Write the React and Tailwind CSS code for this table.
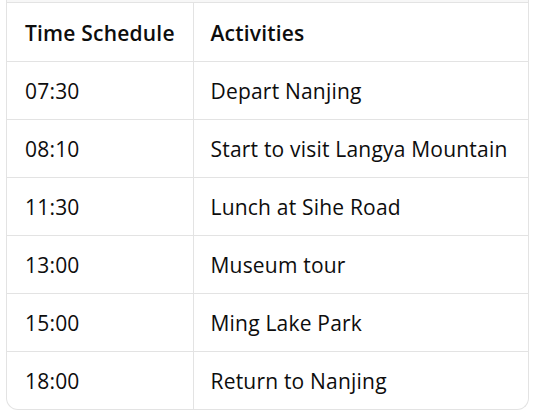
export default function App() {
  const rows = [
    ["07:30", "Depart Nanjing"],
    ["08:10", "Start to visit Langya Mountain"],
    ["11:30", "Lunch at Sihe Road"],
    ["13:00", "Museum tour"],
    ["15:00", "Ming Lake Park"],
    ["18:00", "Return to Nanjing"],
  ];
  return (
    <div className="w-[534px] h-[418px] bg-white" style={{ fontFamily: '"Open Sans", "Noto Sans", sans-serif' }}>
      <div className="ml-[6px] w-[523px] border border-t-0 border-[#e3e3e3] rounded-b-[12px] overflow-hidden text-[#0d0d0d]">
        <div className="h-[3px] border-b border-[#e3e3e3] bg-[#f7f7f7]" />
        <table className="w-full border-collapse text-[21px] tracking-[0.2px]">
          <thead>
            <tr className="h-[58px] bg-white">
              <th className="w-[186px] text-left font-semibold pl-[18px] pt-[3px] border-r border-[#e3e3e3]">Time Schedule</th>
              <th className="text-left font-semibold pl-[17px] pt-[3px]">Activities</th>
            </tr>
          </thead>
          <tbody>
            {rows.map(([t, a]) => (
              <tr key={t} className="h-[58px] border-t border-[#e3e3e3]">
                <td className="pl-[18px] pt-[3px] border-r border-[#e3e3e3]">{t}</td>
                <td className="pl-[17px] pt-[3px]">{a}</td>
              </tr>
            ))}
          </tbody>
        </table>
      </div>
    </div>
  );
}
